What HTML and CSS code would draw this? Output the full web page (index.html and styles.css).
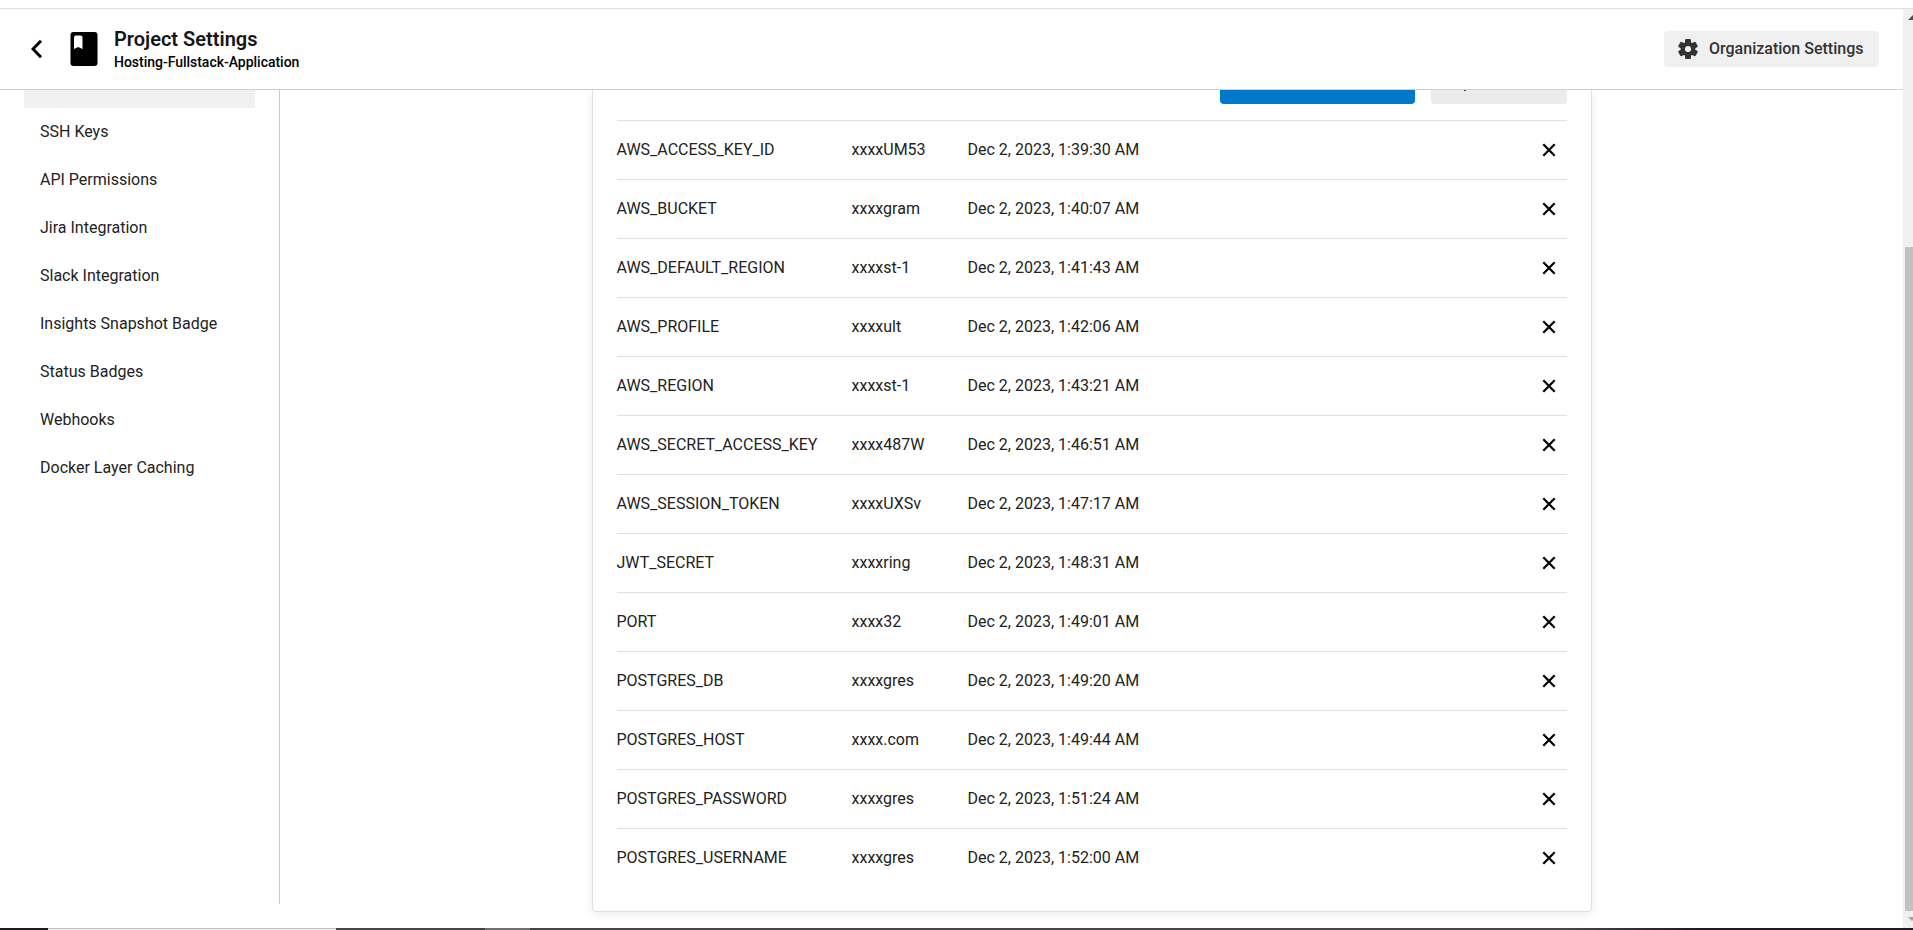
FILE: index.html
```html
<!DOCTYPE html>
<html lang="en">
<head>
<meta charset="utf-8">
<title>Project Settings</title>
<link rel="stylesheet" href="styles.css">
</head>
<body>
<div class="window">
  <div class="tabline"></div>
  <div class="viewport">
    <div class="app">
      <header class="header">
        <svg class="back" width="12" height="20" viewBox="0 0 12 20"><path d="M10 1.800 2 10l8 8.200" fill="none" stroke="#000" stroke-width="3"/></svg>
        <svg class="book" width="28" height="34" viewBox="0 0 28 34"><path fill-rule="evenodd" d="M3.500 0h21a3 3 0 0 1 3 3v28a3 3 0 0 1-3 3h-21a3 3 0 0 1-3-3V3a3 3 0 0 1 3-3Zm2.500 3.500a2 2 0 0 0-2 2V17l4.200-2 4.300 2V5.500a2 2 0 0 0-2-2Z"/></svg>
        <div class="titles">
          <h1 class="title">Project Settings</h1>
          <div class="subtitle">Hosting-Fullstack-Application</div>
        </div>
        <button class="org">
          <svg width="20" height="20" viewBox="0 0 20 20" fill="#333"><circle cx="10" cy="10" r="5.200" fill="none" stroke="#333" stroke-width="4.200"/><g id="teeth"><rect x="7" y="0" width="6" height="5" rx="1.300"/><rect x="7" y="15" width="6" height="5" rx="1.300"/></g><use href="#teeth" transform="rotate(60 10 10)"/><use href="#teeth" transform="rotate(120 10 10)"/></svg>
          <span>Organization Settings</span>
        </button>
      </header>
      <div class="body">
        <nav class="sidebar">
          <div class="active"></div>
          <a class="item">SSH Keys</a>
          <a class="item">API Permissions</a>
          <a class="item">Jira Integration</a>
          <a class="item">Slack Integration</a>
          <a class="item">Insights Snapshot Badge</a>
          <a class="item">Status Badges</a>
          <a class="item">Webhooks</a>
          <a class="item">Docker Layer Caching</a>
        </nav>
        <main class="main">
          <section class="card">
            <div class="actions"><div class="btn primary"></div><div class="btn secondary"><i class="descender"></i></div></div>
            <div class="rows" id="rows"></div>
          </section>
        </main>
      </div>
    </div>
    <div class="scrollbar">
      <svg class="up" width="5" height="5" viewBox="0 0 5 5"><path d="M0 5 5 0v5Z" fill="#505050"/></svg>
      <div class="thumb"></div>
      <svg class="down" width="5" height="4" viewBox="0 0 5 4"><path d="M0 0h8L4 4Z" fill="#a3a3a3"/></svg>
    </div>
  </div>
  <div class="taskbar"><i class="start"></i><i class="search"></i><i class="apps"></i><i class="current"></i><i class="rest"></i></div>
</div>
<script src="rows.js"></script>
</body>
</html>
```
FILE: styles.css
```css
* { box-sizing: border-box; }
body { margin: 0; font-family: Roboto, "Liberation Sans", sans-serif; font-size: 16px; color: #222; background: #fff; overflow: hidden; }
.window { height: 930px; display: flex; flex-direction: column; }
.tabline { height: 9px; border-bottom: 1px solid #dfdfdf; flex: none; }
.viewport { flex: 1; min-height: 0; display: flex; }
.app { flex: 1; display: flex; flex-direction: column; min-width: 0; }
.header { height: 81px; flex: none; border-bottom: 1px solid #d0d0d0; display: flex; align-items: center; padding: 0 24px 0 31px; }
.back { margin-right: 27px; }
.titles { margin-left: 16px; }
.title { margin: 0; font-size: 20px; line-height: 24px; font-weight: 600; color: #161616; }
.subtitle { padding-top: 1px; font-size: 14px; line-height: 20px; font-weight: 500; letter-spacing: -0.02px; color: #000; }
.org { margin-left: auto; width: 215px; height: 36px; border: 0; border-radius: 4px; background: #f0f0f0; display: flex; align-items: center; gap: 11px; padding: 0 0 0 14px; font: 500 16px/24px Roboto, sans-serif; color: #333; white-space: nowrap; }
.body { flex: 1; display: flex; min-height: 0; }
.sidebar { width: 280px; height: 814px; border-right: 1px solid #ccc; padding: 0 24px; }
.active { height: 18px; background: #f0f0f0; }
.item { display: block; height: 48px; line-height: 48px; padding-left: 16px; }
.main { flex: 1; padding: 0 311px 0 312px; overflow: hidden; }
.card { height: 822px; border: 1px solid #e0e0e0; border-top: 0; border-radius: 0 0 4px 4px; padding: 0 24px; box-shadow: 0 2px 10px rgba(0,0,0,.08); }
.actions { height: 30px; display: flex; justify-content: flex-end; gap: 16px; }
.btn { height: 14px; border-radius: 0 0 4px 4px; }
.primary { width: 195px; background: #0078ca; }
.secondary { width: 136px; background: #ebebeb; padding-left: 33px; }
.descender { display: block; width: 2px; height: 1px; background: #444; }
.row { height: 59px; border-top: 1px solid #e0e0e0; display: grid; grid-template-columns: 234.5px 116px 1fr 36px; align-items: center; line-height: 58px; white-space: nowrap; }
.name { margin-left: -0.5px; }
.close { display: block; }
.scrollbar { width: 10px; background: #f0f0f0; display: flex; flex-direction: column; }
.up { margin: 6px 0 0 5px; }
.thumb { margin: 227px 0 0 2px; height: 664px; background: #c1c1c1; }
.down { margin: 6px 0 0 5px; }
.taskbar { height: 2px; flex: none; display: flex; }
.start { width: 48px; background: #1c1c1c; }
.search { width: 288px; background: #f3f3f3; border-top: 1px solid #bdbdbd; }
.apps { width: 149px; background: #454545; }
.current { width: 45px; background: #707070; }
.rest { flex: 1; background: linear-gradient(90deg, #454545 0, #454545 75%, #1d1920 85%); }
```
FILE: rows.js
```js
const rows = [
  ["AWS_ACCESS_KEY_ID", "xxxxUM53", "1:39:30"],
  ["AWS_BUCKET", "xxxxgram", "1:40:07"],
  ["AWS_DEFAULT_REGION", "xxxxst-1", "1:41:43"],
  ["AWS_PROFILE", "xxxxult", "1:42:06"],
  ["AWS_REGION", "xxxxst-1", "1:43:21"],
  ["AWS_SECRET_ACCESS_KEY", "xxxx487W", "1:46:51"],
  ["AWS_SESSION_TOKEN", "xxxxUXSv", "1:47:17"],
  ["JWT_SECRET", "xxxxring", "1:48:31"],
  ["PORT", "xxxx32", "1:49:01"],
  ["POSTGRES_DB", "xxxxgres", "1:49:20"],
  ["POSTGRES_HOST", "xxxx.com", "1:49:44"],
  ["POSTGRES_PASSWORD", "xxxxgres", "1:51:24"],
  ["POSTGRES_USERNAME", "xxxxgres", "1:52:00"]
];
document.getElementById("rows").innerHTML = rows.map(([name, value, time]) =>
  `<div class="row"><span class="name">${name}</span><span>${value}</span><span>Dec 2, 2023, ${time} AM</span>` +
  `<svg class="close" width="36" height="16" viewBox="0 0 36 16"><path d="M12.300 2.300l11.400 11.400M23.700 2.300L12.300 13.700" stroke="#000" stroke-width="2.200"/></svg></div>`
).join("");
```
